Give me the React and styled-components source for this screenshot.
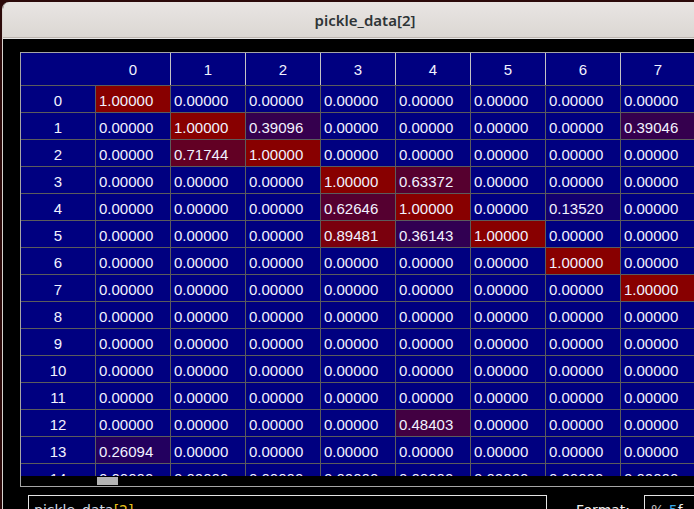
import React from "react";
import styled, { createGlobalStyle } from "styled-components";

const GlobalStyle = createGlobalStyle`
  html, body {
    margin: 0;
    padding: 0;
    background: #2c0a0a;
    overflow: hidden;
  }
`;

const Page = styled.div`
  width: 694px;
  height: 509px;
  overflow: hidden;
  padding: 2px 0 0 2px;
  box-sizing: border-box;
`;

const Window = styled.div`
  width: 724px;
  height: 520px;
  background: #000;
  border-left: 1px solid #d8d4d0;
  border-top-left-radius: 7px;
  overflow: hidden;
`;

const TitleBar = styled.div`
  height: 35px;
  display: flex;
  align-items: center;
  justify-content: center;
  background: linear-gradient(#e9e5e3, #dbd7d3);
  border-bottom: 1px solid #bdb5af;
  box-shadow: 0 1px 0 #e6e6e6;
  font-family: "Noto Sans", "DejaVu Sans", sans-serif;
  font-size: 15px;
  font-weight: 600;
  color: #2e3436;
`;

const Content = styled.div`
  padding: 14px 0 0 17px;
`;

const TableFrame = styled.div`
  border: 1px solid #a6a6a6;
  border-right: none;
  background: #000;
`;

const Grid = styled.div`
  height: 423px;
  overflow: hidden;
  font-family: "Liberation Sans", Arial, sans-serif;
  font-size: 15px;
  color: #f2f2ff;
`;

const HeadRow = styled.div`
  display: flex;
  height: 32px;
  background: #000080;
  border-bottom: 1px solid #5c5c5c;
`;

const Corner = styled.div`
  width: 75px;
  flex: none;
`;

const HeadCell = styled.div`
  width: 75px;
  flex: none;
  box-sizing: border-box;
  border-right: 1px solid #c4c4c4;
  text-align: center;
  line-height: 34px;
`;

const Row = styled.div`
  display: flex;
  height: 26px;
  border-bottom: 1px solid #5c5c5c;
`;

const RowHead = styled.div`
  width: 75px;
  flex: none;
  box-sizing: border-box;
  border-right: 1px solid #5c5c5c;
  background: #000080;
  text-align: center;
  line-height: 29px;
`;

const Cell = styled.div`
  width: 75px;
  flex: none;
  box-sizing: border-box;
  border-right: 1px solid #5c5c5c;
  background: ${(p) => p.$bg};
  padding-left: 3px;
  line-height: 29px;
  white-space: nowrap;
`;

const ScrollBar = styled.div`
  height: 10px;
  background: #000;
  padding: 1px 0 0 76px;
  box-sizing: border-box;
`;

const Thumb = styled.div`
  width: 21px;
  height: 8px;
  background: #b4b4b4;
`;

const Footer = styled.div`
  display: flex;
  align-items: flex-start;
  margin-top: 8px;
  padding-left: 8px;
  font-family: "DejaVu Sans", sans-serif;
  font-size: 14px;
`;

const Input = styled.div`
  width: 519px;
  height: 30px;
  box-sizing: border-box;
  border: 1px solid #e4e4e4;
  padding: 6px 0 0 5px;
  color: #cfd8e4;
`;

const Label = styled.div`
  margin: 7px 0 0 29px;
  color: #f0f0f0;
`;

const FormatBox = styled.div`
  width: 60px;
  height: 30px;
  margin-left: 14px;
  box-sizing: border-box;
  border: 1px solid #e4e4e4;
  border-right: none;
  padding: 6px 0 0 6px;
  color: #bcbcbc;
`;

const Accent = styled.span`
  color: ${(p) => p.$color};
`;

const N = 15;
const COLS = 9;
const special = {
  "0,0": 1,
  "1,1": 1,
  "1,2": 0.39096,
  "1,7": 0.39046,
  "2,1": 0.71744,
  "2,2": 1,
  "3,3": 1,
  "3,4": 0.63372,
  "4,3": 0.62646,
  "4,4": 1,
  "4,6": 0.1352,
  "5,3": 0.89481,
  "5,4": 0.36143,
  "5,5": 1,
  "6,6": 1,
  "7,7": 1,
  "12,4": 0.48403,
  "13,0": 0.26094,
};

const colorFor = (v) =>
  `rgb(${Math.round(136 * v)}, 0, ${Math.round(128 * (1 - v))})`;

export default function App() {
  const rows = Array.from({ length: N }, (_, r) => r);
  const cols = Array.from({ length: COLS }, (_, c) => c);
  return (
    <Page>
      <GlobalStyle />
      <Window>
        <TitleBar>pickle_data[2]</TitleBar>
        <Content>
          <TableFrame>
            <Grid>
              <HeadRow>
                <Corner />
                {cols.map((c) => (
                  <HeadCell key={c}>{c}</HeadCell>
                ))}
              </HeadRow>
              {rows.map((r) => (
                <Row key={r}>
                  <RowHead>{r}</RowHead>
                  {cols.map((c) => {
                    const v = special[`${r},${c}`] || 0;
                    return (
                      <Cell key={c} $bg={colorFor(v)}>
                        {v.toFixed(5)}
                      </Cell>
                    );
                  })}
                </Row>
              ))}
            </Grid>
            <ScrollBar>
              <Thumb />
            </ScrollBar>
          </TableFrame>
          <Footer>
            <Input>
              pickle_data<Accent $color="#e8c21a">[2]</Accent>
            </Input>
            <Label>Format:</Label>
            <FormatBox>
              %<Accent $color="#f0f0f0">.</Accent>
              <Accent $color="#38a8e8">5</Accent>
              <Accent $color="#f0f0f0">f</Accent>
            </FormatBox>
          </Footer>
        </Content>
      </Window>
    </Page>
  );
}
